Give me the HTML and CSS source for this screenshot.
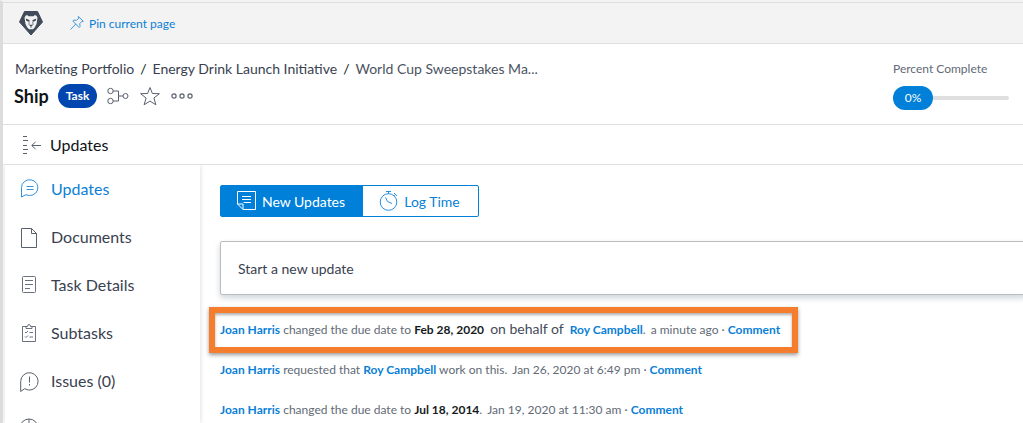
FILE: index.html
```html
<!DOCTYPE html>
<html lang="en">
<head>
<meta charset="utf-8">
<title>Ship - Updates</title>
<link rel="stylesheet" href="styles.css">
</head>
<body>
<div class="app">
  <header class="topbar">
    <svg class="logo" width="24" height="24" viewBox="0 0 24 24" aria-label="Home">
      <path d="M5.500 0.500h13l5 10.500-11.500 13L.5 11z" fill="#414b59" stroke="#414b59" stroke-linejoin="round"/>
      <path d="M5.500 6.800l1-2 1.700-.8 1.300 1.200h5L15.800 4l1.700.8 1 2-1 6.200-1.800 3.500-1.700 1.700h-4l-1.700-1.700L6.500 13z" fill="#f3f3f3"/>
      <path d="M6.800 7.500l4 1.700-1 1.600-2.600-1zM17.200 7.500l-4 1.700 1 1.600 2.600-1zM9.800 13.800h4.400L12 16z" fill="#414b59"/>
      <path d="M10.300 10.500l-.5 3.300M13.700 10.500l.5 3.300M12 16v1" fill="none" stroke="#414b59" stroke-width=".7"/>
    </svg>
    <button class="pin" type="button">
      <svg width="14" height="14" viewBox="0 0 14 14" fill="none" stroke="#4099dd" stroke-linejoin="round" stroke-linecap="round"><path d="M8.500.7l4.800 4.600-1.600.3-2 2.100.4 2.700-1 1.100L2.800 5l1-1 2.800.3L8.600 2.400zM5.600 8.200L.7 13.300"/></svg>
      Pin current page
    </button>
  </header>

  <section class="object">
    <div class="object-main">
      <nav class="crumbs" aria-label="Breadcrumb">
        <a href="#">Marketing Portfolio</a><span class="slash">/</span><a href="#">Energy Drink Launch Initiative</a><span class="slash">/</span><a class="current" href="#">World Cup Sweepstakes Ma...</a>
      </nav>
      <div class="title-row">
        <h1>Ship</h1>
        <span class="badge">Task</span>
        <button class="icon-btn" type="button" aria-label="Hierarchy"><svg width="22" height="18" viewBox="0 0 22 18" fill="none" stroke="#59616d"><circle cx="3.500" cy="4" r="2.700"/><circle cx="3.500" cy="14" r="2.700"/><circle cx="18.500" cy="9" r="2.500"/><path d="M6.200 4h5.300v10H6.200M11.500 9H16"/></svg></button>
        <button class="icon-btn" type="button" aria-label="Favorite"><svg width="20" height="20" viewBox="0 0 20 20" fill="none" stroke="#59616d"><path d="M10 1.500l2.400 6 7 .2-5.500 4.300 2 6.800L10 15.100l-5.900 3.700 2-6.800L.6 7.700l7-.2z"/></svg></button>
        <button class="icon-btn" type="button" aria-label="More"><svg width="22" height="8" viewBox="0 0 22 8" fill="none" stroke="#59616d" stroke-width="1.200"><circle cx="3" cy="4" r="2.100"/><circle cx="11" cy="4" r="2.100"/><circle cx="19" cy="4" r="2.100"/></svg></button>
      </div>
    </div>
    <div class="progress">
      <span class="progress-label">Percent Complete</span>
      <div class="progress-row"><span class="progress-value">0%</span><span class="progress-track"></span></div>
    </div>
  </section>

  <div class="section-bar">
    <button class="icon-btn" type="button" aria-label="Collapse menu"><svg width="20" height="20" viewBox="0 0 20 20" fill="none" stroke="#59616d"><path d="M1 1.500h4M1 5.500h5M1 10.500h4M1 14.500h5M1 18.500h4M10 10.500h9M13.500 7l-3.800 3.500 3.800 3.500"/></svg></button>
    <h2>Updates</h2>
  </div>

  <div class="body">
    <nav class="side" aria-label="Task sections">
      <a class="item active" href="#"><svg width="20" height="20" viewBox="0 0 20 20" fill="none" stroke="#3292dc"><path d="M1.500 19V9.500A8.200 7.900 0 1 1 6 16.700zM6.500 8.500h7M6.500 11.500h7"/></svg>Updates</a>
      <a class="item" href="#"><svg width="20" height="24" viewBox="0 0 20 24" fill="none" stroke="#59616d" stroke-linejoin="round"><path d="M1.500 4.500h10l5 5v14h-15zM11.500 4.500v5h5"/></svg>Documents</a>
      <a class="item" href="#"><svg width="20" height="20" viewBox="0 0 20 20" fill="none" stroke="#69717c"><rect x="2.500" y="2.500" width="13" height="16" rx="1"/><path d="M5 6.500h8M5 10.500h8M5 14.500h5"/></svg>Task Details</a>
      <a class="item" href="#"><svg width="20" height="20" viewBox="0 0 20 20" fill="none" stroke="#69717c"><path d="M6 4.500H2.500v15h13v-15H12M6 6.500v-2h1.500a1.500 2 0 0 1 3 0H12v2zM9.500 10.500H13M9.500 15H13M5 10l1 1 2-2M5 14.500l1 1 2-2"/></svg>Subtasks</a>
      <a class="item" href="#"><svg width="20" height="24" viewBox="0 0 20 24" fill="none" stroke="#59616d"><path d="M.7 23.500V13.500a8.700 8.700 0 1 1 4 7.200zM9.500 8.500v6M9.500 16v1.500"/></svg>Issues (0)</a>
      <a class="item" href="#"><svg width="20" height="20" viewBox="0 0 20 20" fill="none" stroke="#59616d"><circle cx="9" cy="10" r="9"/><path d="M9 1v9l4 3"/></svg>Hours</a>
    </nav>

    <main class="content">
      <div class="tabs">
        <button class="tab selected" type="button"><svg width="20" height="20" viewBox="0 0 20 20" fill="none" stroke="#fff"><path d="M.5.500h18v18H6L.5 13zM.5 13H6v5.500M5 5.500h9M5 8.500h9M6.500 11.500H14"/></svg>New Updates</button>
        <button class="tab" type="button"><svg width="20" height="20" viewBox="0 0 20 20" fill="none" stroke="#2a8fdc"><circle cx="9.500" cy="11" r="8.300"/><path d="M7 .5h5M9.500.5v2.300M15 2l3 3M16.500 3.500l-1.200 1.200M6.500 6.500l2 4 4.500 2"/></svg>Log Time</button>
      </div>
      <input class="composer" type="text" aria-label="Start a new update" placeholder="Start a new update">
      <ul class="feed">
        <li class="highlight"><a href="#">Joan Harris</a> changed the due date to <strong>Feb 28, 2020</strong> <span class="behalf">on behalf of</span> <a href="#">Roy Campbell</a>. <span class="when">a minute ago</span> · <a href="#">Comment</a></li>
        <li><a href="#">Joan Harris</a> requested that <a href="#">Roy Campbell</a> work on this. <span class="when">Jan 26, 2020 at 6:49 pm</span> · <a href="#">Comment</a></li>
        <li><a href="#">Joan Harris</a> changed the due date to <strong>Jul 18, 2014</strong>. <span class="when">Jan 19, 2020 at 11:30 am</span> · <a href="#">Comment</a></li>
      </ul>
    </main>
  </div>
</div>
</body>
</html>
```
FILE: styles.css
```css
* { box-sizing: border-box; }
body {
  margin: 0;
  height: 100vh;
  overflow: hidden;
  background: #fff;
  color: #39414f;
  font-family: Lato, "Open Sans", sans-serif;
  font-size: 14px;
}
a { color: inherit; text-decoration: none; }
button { border: 0; padding: 0; background: none; font: inherit; color: inherit; cursor: pointer; }
svg { display: block; flex: none; }
h1, h2 { margin: 0; color: #101419; }

.app {
  height: 100%;
  display: flex;
  flex-direction: column;
  border-left: 3px solid #dcdcdc;
  border-top: 2px solid #f3f3f3;
}
.topbar {
  flex: none;
  height: 42px;
  display: flex;
  align-items: center;
  gap: 27px;
  padding-left: 16px;
  background: #f3f3f3;
  border-top: 1px solid #dedede;
  border-bottom: 1px solid #dedede;
}
.pin { display: flex; align-items: center; gap: 5px; color: #0a80d6; font-size: 12px; }

.object {
  flex: none;
  height: 81px;
  display: flex;
  justify-content: space-between;
  padding: 16px 14px 0 11px;
  border-bottom: 1px solid #e0e0e0;
}
.crumbs { padding-left: 1px; line-height: 18px; white-space: nowrap; }
.slash { margin: 0 6px; color: #101419; }
.current { color: #4b5462; }
.title-row { display: flex; align-items: center; height: 24px; margin-top: 6px; }
.title-row h1 { font-size: 18px; line-height: 24px; }
.badge {
  margin: 0 10px 0 9px;
  padding: 0 8px;
  border-radius: 12px;
  background: #0146ae;
  color: #fff;
  font-size: 12px;
  font-weight: 700;
  line-height: 24px;
}
.title-row .icon-btn + .icon-btn { margin-left: 11px; }
.progress { width: 116px; color: #626a76; font-size: 12px; }
.progress-label { display: block; line-height: 18px; }
.progress-row { display: flex; align-items: center; margin-top: 8px; }
.progress-value {
  width: 40px;
  border-radius: 12px;
  background: #0080d8;
  color: #fff;
  text-align: center;
  line-height: 24px;
}
.progress-track { flex: 1; height: 4px; border-radius: 0 2px 2px 0; background: #dfdfdf; }

.section-bar {
  flex: none;
  height: 40px;
  display: flex;
  align-items: center;
  gap: 8px;
  padding-left: 19px;
  border-bottom: 1px solid #e0e0e0;
}
.section-bar h2 { font-size: 16px; font-weight: 400; line-height: 24px; }

.body { flex: 1; min-height: 0; display: flex; }
.side {
  flex: none;
  width: 195px;
  margin-left: 2px;
  box-shadow: 0 0 5px #d4d7e0;
  clip-path: inset(0 -6px 0 -6px);
}
.item { display: flex; align-items: center; gap: 11px; height: 48px; padding: 0 0 2px 15px; font-size: 16px; }
.item.active { color: #0a80d6; }

.content { flex: 1; min-width: 0; padding: 20px 0 0 20px; }
.tabs { display: flex; width: 259px; height: 32px; border: 1px solid #0080d8; border-radius: 2px; }
.tab { display: flex; flex: 1; align-items: center; justify-content: center; gap: 5px; padding-right: 2px; color: #0a80d6; white-space: nowrap; }
.tab.selected { flex: none; width: 142px; background: #0080d8; color: #fff; }
.composer {
  display: block;
  width: calc(100% + 4px);
  height: 54px;
  margin-top: 24px;
  padding: 0 17px;
  border: 1px solid #bcbcbc;
  border-radius: 2px;
  box-shadow: 0 3px 6px #cdd4da;
  font: inherit;
}
.composer::placeholder { color: #39414f; opacity: 1; }
.feed {
  margin: 12px 0 0 -11px;
  padding: 0;
  list-style: none;
  color: #626a76;
  font-size: 12px;
  line-height: 20px;
}
.feed li { height: 40px; padding-left: 11px; white-space: nowrap; }
.feed a { color: #0a80d6; font-weight: 700; }
.feed strong { color: #161a20; }
.feed .highlight {
  width: 589px;
  height: 46px;
  margin-bottom: 7px;
  padding: 6px 5px;
  border: 6px solid #f47e2d;
  box-shadow: 0 2px 4px #9a9a9a, inset 0 2px 3px #b0b0b0;
}
.behalf { margin: 0 3px; font-size: 14px; color: #434b59; }
.when { margin-left: 2px; }
```
